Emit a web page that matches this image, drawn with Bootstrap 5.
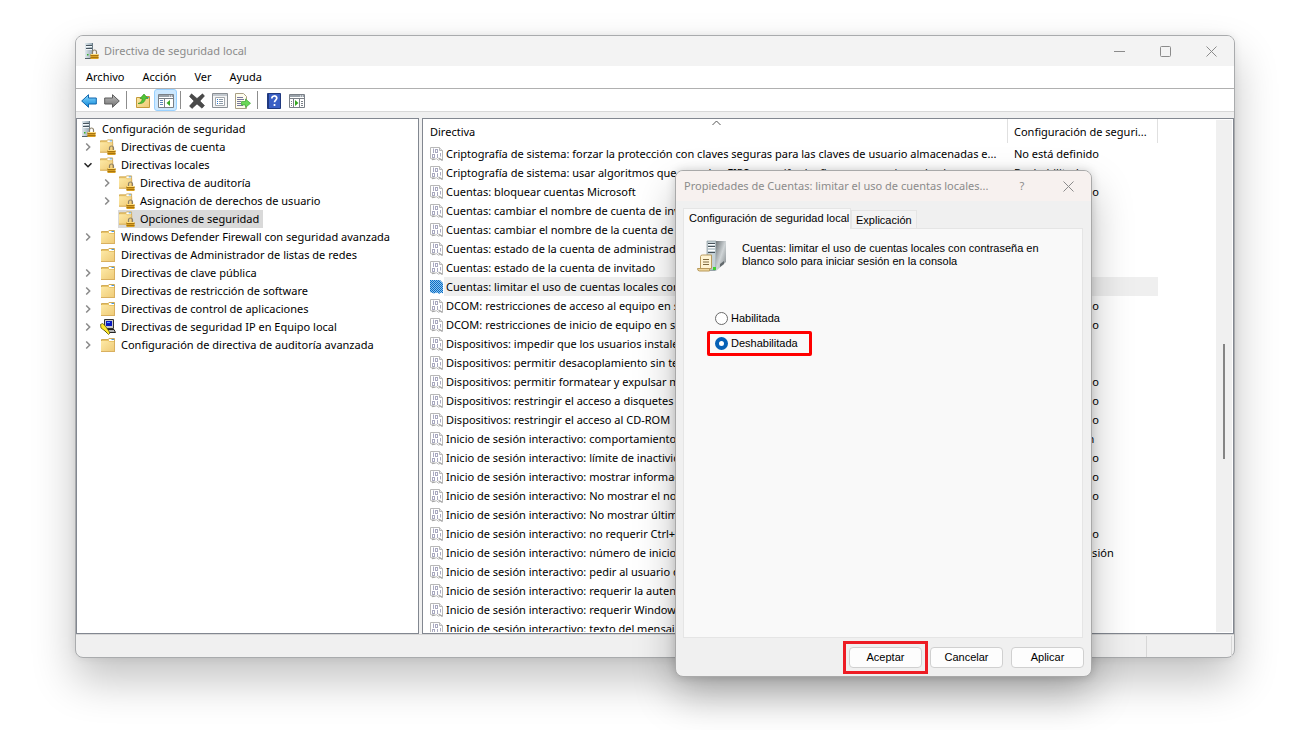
<!DOCTYPE html>
<html lang="es">
<head>
<meta charset="utf-8">
<meta name="viewport" content="width=device-width, initial-scale=1">
<title>Directiva de seguridad local</title>
<link href="https://cdn.jsdelivr.net/npm/bootstrap@5.3.0/dist/css/bootstrap.min.css" rel="stylesheet">
<style>
  body { font: 11px/18px "Noto Sans", "Open Sans", sans-serif; color: #000; background: #fff; }
  .desktop { padding: 35px 77px 72px 75px; }
  .win { min-height: 0; border: 1px solid #a9abad; border-radius: 8px; background: #f0f0f0; box-shadow: 0 22px 44px rgba(0,0,0,.24), 0 0 8px rgba(0,0,0,.08); }
  .caption { height: 30px; background: #f3f3f3; border-radius: 7px 7px 0 0; color: #8b8b8b; padding-left: 8px; }
  .caption button, .toolbtn, .twist { border: 0; background: none; padding: 0; color: inherit; display: flex; align-items: center; justify-content: center; }
  .caption button { width: 46px; height: 28px; }
  .menus { height: 23px; border-bottom: 1px solid #b0b0b0; padding-left: 10px; gap: 18px; }
  .menus a { color: #000; text-decoration: none; }
  .tools { height: 23px; border-bottom: 1px solid #d8d8d8; padding-left: 1px; }
  .toolbtn { width: 23px; height: 22px; border: 1px solid transparent; padding-top: 2px; }
  .toolbtn.on { background: #cce8ff; border-color: #99d1ff; border-radius: 3px; }
  .rule { width: 8px; height: 18px; border-left: 1px solid #8d8d8d; margin-left: 3px; margin-right: -3px; }
  .panes { gap: 3px; padding-top: 6px; min-height: 0; }
  .pane { background: #fff; border: 1px solid #828790; overflow: hidden; min-width: 0; }
  .tree-pane { flex: 0 0 343px; padding-top: 1px; }
  .tree-pane ul { list-style: none; margin: 0; padding: 0; }
  .tree-pane ul ul ul { padding-left: 19px; }
  .node { height: 18px; display: flex; align-items: center; padding-left: 3px; gap: 3px; }
  .twist { width: 16px; height: 18px; color: #8a8a8a; }
  .twist.open { color: #222; }
  .node a { display: flex; align-items: center; gap: 5px; padding: 0 4px 0 1px; color: #000; text-decoration: none; white-space: nowrap; }
  .node a.sel { background: #d9d9d9; }
  .list-view { margin-bottom: 1px; }
  .grid { table-layout: fixed; width: 100%; border-collapse: collapse; }
  .grid th { height: 25px; font-weight: 400; padding: 1px 0 0 7px; position: relative; white-space: nowrap; }
  .grid th.edge::after { content: ""; position: absolute; right: 0; top: 0; height: 24px; border-right: 1px solid #e0e0e0; }
  .grid td { padding: 0 0 0 7px; height: 19px; line-height: 19px; white-space: nowrap; overflow: hidden; }
  .grid th + th, .grid td + td { padding-left: 6px; }
  .grid td svg { width: 13px; height: 14px; vertical-align: -3px; margin-right: 3px; }
  .grid .hot td { background: #efefef; }
  .grid .hot td:first-child { background: linear-gradient(#efefef, #efefef) 21px 0 no-repeat; }
  .grid .hot td:last-child { background: none; }
  .caret { position: absolute; top: 1px; left: 50%; margin-left: -4px; }
  .track { flex: 0 0 16px; background: #f0f0f0; margin: 1px; padding: 224px 0 0 7px; }
  .thumb { width: 2px; height: 115px; background: #858585; }
  .status { height: 23px; border-top: 1px solid #d7d7d7; padding: 1px 2px 0 0; }
  .status div { border-right: 1px solid #d7d7d7; }
  .status .cell { width: 85px; }
  .dlg { position: absolute; left: 599px; top: 134px; width: 417px; border: 1px solid #a9a9a9; border-radius: 8px; background: #f0f0f0; font: 11px/13px "Liberation Sans", Arial, sans-serif; box-shadow: 0 20px 40px rgba(0,0,0,.26), 0 0 10px rgba(0,0,0,.16); }
  .dlg .caption { background: #f7f1ef; font: 11px/18px "Noto Sans", sans-serif; }
  .sheet { padding: 7px 8px 0 7px; }
  .tabs button { border: 1px solid #e5e5e5; border-bottom: 0; background: #f3f3f3; height: 18px; padding: 1px 4px 0; color: #000; }
  .tabs button.on { background: #f9f9f9; height: 21px; margin-bottom: -1px; padding: 0 5px 2px; width: 168px; text-align: left; white-space: nowrap; position: relative; z-index: 1; }
  .page { background: #f9f9f9; border: 1px solid #e5e5e5; height: 410px; padding: 11px 13px; }
  .summary { gap: 13px; margin-bottom: 34px; }
  .summary p { padding-top: 2px; white-space: nowrap; }
  .radios { padding-left: 10px; }
  .opt { height: 25px; width: 105px; padding-left: 5px; border: 3px solid transparent; display: flex; align-items: center; gap: 3px; }
  .opt.marked { border-color: #f00; border-radius: 2px; }
  .opt input { appearance: none; flex: none; width: 13px; height: 13px; margin: 0; border: 1px solid #6b6b6b; border-radius: 50%; background: #fff; }
  .opt input:checked { border: 4px solid #0560b6; }
  .acts { padding: 9px 7px 8px; gap: 8px; }
  .acts button { width: 73px; height: 21px; border: 1px solid #d0d0d0; border-radius: 4px; background: #fdfdfd; color: #000; padding: 0; }
  .acts .wrapmark { outline: 3px solid #ed1c24; outline-offset: 3px; display: flex; }
</style>
<script src="https://cdn.jsdelivr.net/npm/bootstrap@5.3.0/dist/js/bootstrap.bundle.min.js"></script>
</head>
<body class="overflow-hidden">
<svg width="0" height="0" class="position-absolute" aria-hidden="true">
  <defs>
    <linearGradient id="gFold" x1="0" y1="0" x2="1" y2="1"><stop offset="0" stop-color="#fde9a6"/><stop offset="1" stop-color="#eec974"/></linearGradient>
    <linearGradient id="gBlue" x1="0" y1="0" x2="0" y2="1"><stop offset="0" stop-color="#8fdcff"/><stop offset="1" stop-color="#0a85d8"/></linearGradient>
    <linearGradient id="gGray" x1="0" y1="0" x2="0" y2="1"><stop offset="0" stop-color="#bdbdbd"/><stop offset="1" stop-color="#707070"/></linearGradient>
    <linearGradient id="gTower" x1="0" y1="0" x2="1" y2="0"><stop offset="0" stop-color="#dfe8ed"/><stop offset="1" stop-color="#92a5b0"/></linearGradient>
    <linearGradient id="gSide" x1="0" y1="0" x2="1" y2="1"><stop offset="0" stop-color="#6f7679"/><stop offset=".5" stop-color="#cfd4d6"/><stop offset="1" stop-color="#7d8487"/></linearGradient>
    <pattern id="dots" width="2" height="2" patternUnits="userSpaceOnUse"><rect width="2" height="2" fill="#8cc3ee"/><path d="M0 0h1v1H0zM1 1h1v1H1z" fill="#0b6cc4"/></pattern>
    <symbol id="lock" viewBox="0 0 9 10"><path d="M2.500 5V3a2 2 0 0 1 4 0v2" fill="none" stroke="#8c8068" stroke-width="1.200"/><path d="M.5 5h8v5h-8z" fill="#d9a021"/><path d="M.5 6.500h8M.5 8.500h8" stroke="#a8740e"/><path d="M1 5.500h7" stroke="#ffdc7a"/></symbol>
    <symbol id="srvlock" viewBox="0 0 16 16"><path d="M1 0h8v15H1z" fill="url(#gTower)"/><path d="M2 2.500h6M2 5.500h6" stroke="#46545e"/><path d="M2 3.500h6M2 6.500h6" stroke="#f4f8fa"/><rect x="3" y="11" width="1.500" height="1.500" fill="#36b22c"/><path d="M1 15.500h8" stroke="#54626b"/><path d="M8.500 0v15" stroke="#6b7c87"/><use href="#lock" x="6" y="6" width="9" height="10"/></symbol>
    <symbol id="fold" viewBox="0 0 16 16"><path d="M1.500 14.500v-12H8l1-1h5.500v13z" fill="#e8c468" stroke="#d2ac58"/><path d="M9 2h5v2H9z" fill="#fff"/><path d="M11.500 2.500H14" stroke="#4a9be0"/><path d="M1 4h7.500l1 1H15v10H1z" fill="url(#gFold)"/><path d="M1 14.500h14M14.500 5v10" stroke="#d9b060"/></symbol>
    <symbol id="foldlock" viewBox="0 0 16 16"><use href="#fold" x="-1" y="-1" width="15" height="16"/><use href="#lock" x="7" y="6" width="9" height="10"/></symbol>
    <symbol id="ipsec" viewBox="0 0 16 16"><path d="M4.500.5h9v9h-9z" fill="#c9c9c9" stroke="#333"/><path d="M6 2h6v5H6z" fill="#0818c0"/><path d="M7 3.500h3" stroke="#58a8ff"/><path d="M4 10.500h10l1.500 3h-9z" fill="#b5b5b5" stroke="#222"/><path d="M.5 5.500l2-1 2 1.500 3 4 2.500 4-1.500 1.500-3.500-3.500L1 9z" fill="#ffe92b" stroke="#4b4300" stroke-width=".7"/></symbol>
    <symbol id="pol" viewBox="0 0 13 14"><path d="M.5.500h9l3 3v9.500l-2-.8-2 1-2-1.500-2.500.8-3.500-1z" fill="#fff" stroke="#b8b8b8"/><path d="M9.500.500v3h3" fill="#e6e6e6" stroke="#b8b8b8"/><path d="M2 12.500l2.500-.5M8.500 11l4 2.500" stroke="#a8a8a8" stroke-width="1.300"/><g fill="none" stroke="#a9a9c0"><path d="M3.500 1.500V6M7.500 7v4M10.500 6v3.500"/><rect x="5.500" y="2.500" width="2" height="3"/><rect x="2.500" y="7.500" width="2" height="3"/></g></symbol>
    <symbol id="polsel" viewBox="0 0 13 14"><path d="M0 0h10l3 3v10.500l-2-1-2 1.500-2-1.500-3 1-4-1.500z" fill="url(#dots)"/></symbol>
    <symbol id="cr" viewBox="0 0 8 8"><path d="M2.200.5L5.700 4 2.200 7.500" fill="none" stroke="currentColor" stroke-width="1.500"/></symbol>
    <symbol id="cd" viewBox="0 0 8 8"><path d="M.5 2.200L4 5.700 7.500 2.200" fill="none" stroke="currentColor" stroke-width="1.600"/></symbol>
    <symbol id="xx" viewBox="0 0 11 11"><path d="M.5.500l10 10M10.500.500l-10 10" stroke="currentColor" fill="none"/></symbol>
    <symbol id="arrow" viewBox="0 0 16 16"><path d="M.700 8L7.500 1.700V5h7.800v6H7.500v3.300z"/></symbol>
    <symbol id="panel" viewBox="0 0 16 14"><path d="M.5.500h15v13H.5z" fill="#fff" stroke="#7a8087"/><path d="M1 2h14" stroke="#9aa2aa" stroke-width="2"/><path d="M11 2h1M13 2h1" stroke="#fff"/><path d="M1 4.500h14" stroke="#7a8087"/></symbol>
  </defs>
</svg>

<main class="desktop vh-100 d-flex flex-column">
  <section class="win position-relative flex-grow-1 d-flex flex-column">
    <header class="caption d-flex align-items-center flex-shrink-0">
      <svg class="me-1" width="16" height="16"><use href="#srvlock"/></svg>
      <span class="me-auto">Directiva de seguridad local</span>
      <button aria-label="Minimizar"><svg width="11" height="11"><path d="M0 5.500h11" stroke="currentColor"/></svg></button>
      <button aria-label="Maximizar"><svg width="11" height="11"><rect x=".5" y=".5" width="10" height="10" rx="1" fill="none" stroke="currentColor"/></svg></button>
      <button aria-label="Cerrar"><svg width="11" height="11"><use href="#xx"/></svg></button>
    </header>
    <nav class="menus bg-white d-flex align-items-center flex-shrink-0">
      <a href="#">Archivo</a><a href="#">Acción</a><a href="#">Ver</a><a href="#">Ayuda</a>
    </nav>
    <div class="tools bg-white d-flex align-items-center flex-shrink-0">
      <button class="toolbtn" aria-label="Atrás"><svg width="16" height="16" fill="url(#gBlue)" stroke="#1267ad"><use href="#arrow"/></svg></button>
      <button class="toolbtn" aria-label="Adelante"><svg width="16" height="16" fill="url(#gGray)" stroke="#5c5c5c"><g transform="matrix(-1 0 0 1 16 0)"><use href="#arrow"/></g></svg></button>
      <span class="rule"></span>
      <button class="toolbtn" aria-label="Subir un nivel"><svg width="16" height="16"><path d="M1.500 14.500v-10h5l1-1h7v11z" fill="url(#gFold)" stroke="#c49a3c"/><path d="M11 4.500h3" stroke="#4a9be0"/><path d="M3 10.500c3-.5 4-2.500 4.200-5H5L9 1l4 4.500h-2.500c-.5 3.500-3 5.500-7.500 5z" fill="#4fc436" stroke="#2a8f1c" stroke-width=".6"/></svg></button>
      <button class="toolbtn on" aria-label="Mostrar árbol"><svg width="16" height="14"><use href="#panel"/><path d="M6.500 5v8.500" stroke="#7a8087"/><path d="M2 6.500h3M2 8.500h3M2 10.500h3" stroke="#5a86b8"/><path d="M12 6v6L8.500 9z" fill="#35a822"/></svg></button>
      <span class="rule"></span>
      <button class="toolbtn" aria-label="Eliminar"><svg width="16" height="16"><path d="M2.500.8L8 5.500l5.500-4.700 2 2.200L11 8l4.500 4.500-2.500 2.700L8 11l-5 4.500L.5 13 5 8 .5 3.500z" fill="#4a4a4a" stroke="#333" stroke-width=".5"/></svg></button>
      <button class="toolbtn" aria-label="Propiedades"><svg width="16" height="16"><path d="M.5.500h15v14H.5z" fill="#f4f4f4" stroke="#8a8f94"/><path d="M1 2h14" stroke="#c2c8ce" stroke-width="2"/><path d="M3.500 4.500h9v8h-9z" fill="#fff" stroke="#a4a9ae"/><path d="M5 6.500h1M5 8.500h1M5 10.500h1" stroke="#2a7ad0"/><path d="M7 6.500h4M7 8.500h4M7 10.500h4" stroke="#8b98a5"/></svg></button>
      <button class="toolbtn" aria-label="Exportar lista"><svg width="16" height="16"><path d="M.5.500h8l3 3v12H.5z" fill="#fffdee" stroke="#a89f84"/><path d="M2 4.500h6M2 6.500h7M2 8.500h4M2 10.500h4M2 12.500h6" stroke="#77779c"/><path d="M6.500 8.500h4V6l5 4.300-5 4.200V12h-4z" fill="#6ad857" stroke="#3da431" stroke-width=".7"/></svg></button>
      <span class="rule"></span>
      <button class="toolbtn" aria-label="Ayuda"><svg width="16" height="16"><path d="M1.500.500h13v15h-13z" fill="#3a5fc4" stroke="#20397f"/><path d="M2.500 1v14" stroke="#20397f"/><path d="M5.800 5.500c0-3.300 5-3.300 5-.4 0 2-2.300 2-2.300 4.200M8.500 11v2" fill="none" stroke="#fff" stroke-width="1.700"/></svg></button>
      <button class="toolbtn" aria-label="Panel de acciones"><svg width="16" height="14"><use href="#panel"/><path d="M4.500 5v8.500M10.500 5v8.500" stroke="#7a8087"/><path d="M6 6v6l3.500-3z" fill="#35a822"/><path d="M12 7.500h2M12 9.500h2M12 11.500h2M2 7.500h1M2 9.500h1M2 11.500h1" stroke="#7a8087"/></svg></button>
    </div>

    <div class="panes d-flex flex-grow-1">
      <div class="pane tree-pane">
        <ul>
          <li><div class="node"><a href="#"><svg width="16" height="16"><use href="#srvlock"/></svg>Configuración de seguridad</a></div>
            <ul>
              <li><div class="node"><button class="twist" aria-label="Expandir"><svg width="8" height="8"><use href="#cr"/></svg></button><a href="#"><svg width="16" height="16"><use href="#foldlock"/></svg>Directivas de cuenta</a></div></li>
              <li><div class="node"><button class="twist open" aria-label="Contraer"><svg width="8" height="8"><use href="#cd"/></svg></button><a href="#"><svg width="16" height="16"><use href="#foldlock"/></svg>Directivas locales</a></div>
                <ul>
                  <li><div class="node"><button class="twist" aria-label="Expandir"><svg width="8" height="8"><use href="#cr"/></svg></button><a href="#"><svg width="16" height="16"><use href="#foldlock"/></svg>Directiva de auditoría</a></div></li>
                  <li><div class="node"><button class="twist" aria-label="Expandir"><svg width="8" height="8"><use href="#cr"/></svg></button><a href="#"><svg width="16" height="16"><use href="#foldlock"/></svg>Asignación de derechos de usuario</a></div></li>
                  <li><div class="node"><span class="twist"></span><a href="#" class="sel"><svg width="16" height="16"><use href="#foldlock"/></svg>Opciones de seguridad</a></div></li>
                </ul></li>
              <li><div class="node"><button class="twist" aria-label="Expandir"><svg width="8" height="8"><use href="#cr"/></svg></button><a href="#"><svg width="16" height="16"><use href="#fold"/></svg>Windows Defender Firewall con seguridad avanzada</a></div></li>
              <li><div class="node"><span class="twist"></span><a href="#"><svg width="16" height="16"><use href="#fold"/></svg>Directivas de Administrador de listas de redes</a></div></li>
              <li><div class="node"><button class="twist" aria-label="Expandir"><svg width="8" height="8"><use href="#cr"/></svg></button><a href="#"><svg width="16" height="16"><use href="#fold"/></svg>Directivas de clave pública</a></div></li>
              <li><div class="node"><button class="twist" aria-label="Expandir"><svg width="8" height="8"><use href="#cr"/></svg></button><a href="#"><svg width="16" height="16"><use href="#fold"/></svg>Directivas de restricción de software</a></div></li>
              <li><div class="node"><button class="twist" aria-label="Expandir"><svg width="8" height="8"><use href="#cr"/></svg></button><a href="#"><svg width="16" height="16"><use href="#fold"/></svg>Directivas de control de aplicaciones</a></div></li>
              <li><div class="node"><button class="twist" aria-label="Expandir"><svg width="8" height="8"><use href="#cr"/></svg></button><a href="#"><svg width="16" height="16"><use href="#ipsec"/></svg>Directivas de seguridad IP en Equipo local</a></div></li>
              <li><div class="node"><button class="twist" aria-label="Expandir"><svg width="8" height="8"><use href="#cr"/></svg></button><a href="#"><svg width="16" height="16"><use href="#fold"/></svg>Configuración de directiva de auditoría avanzada</a></div></li>
            </ul></li>
        </ul>
      </div>

      <div class="pane d-flex flex-grow-1">
        <div class="list-view flex-grow-1 overflow-hidden">
          <table class="grid">
            <colgroup><col style="width:585px"><col style="width:150px"><col></colgroup>
            <thead><tr><th class="edge">Directiva<svg class="caret" width="9" height="6"><path d="M.5 5L4.500 1l4 4" fill="none" stroke="#555"/></svg></th><th class="edge">Configuración de seguri...</th><th></th></tr></thead>
            <tbody>
              <tr><td><svg><use href="#pol"/></svg>Criptografía de sistema: forzar la protección con claves seguras para las claves de usuario almacenadas e...</td><td>No está definido</td><td></td></tr>
              <tr><td><svg><use href="#pol"/></svg>Criptografía de sistema: usar algoritmos que cumplan FIPS para cifrado, firma y operaciones hash</td><td>Deshabilitado</td><td></td></tr>
              <tr><td><svg><use href="#pol"/></svg>Cuentas: bloquear cuentas Microsoft</td><td>No está definido</td><td></td></tr>
              <tr><td><svg><use href="#pol"/></svg>Cuentas: cambiar el nombre de cuenta de invitado</td><td>Invitado</td><td></td></tr>
              <tr><td><svg><use href="#pol"/></svg>Cuentas: cambiar el nombre de la cuenta de administrador</td><td>Administrador</td><td></td></tr>
              <tr><td><svg><use href="#pol"/></svg>Cuentas: estado de la cuenta de administrador</td><td>Deshabilitado</td><td></td></tr>
              <tr><td><svg><use href="#pol"/></svg>Cuentas: estado de la cuenta de invitado</td><td>Deshabilitado</td><td></td></tr>
              <tr class="hot"><td><svg><use href="#polsel"/></svg>Cuentas: limitar el uso de cuentas locales con contraseña en blanco</td><td>Habilitada</td><td></td></tr>
              <tr><td><svg><use href="#pol"/></svg>DCOM: restricciones de acceso al equipo en sintaxis SDDL</td><td>No está definido</td><td></td></tr>
              <tr><td><svg><use href="#pol"/></svg>DCOM: restricciones de inicio de equipo en sintaxis SDDL</td><td>No está definido</td><td></td></tr>
              <tr><td><svg><use href="#pol"/></svg>Dispositivos: impedir que los usuarios instalen controladores de impresora</td><td>Deshabilitado</td><td></td></tr>
              <tr><td><svg><use href="#pol"/></svg>Dispositivos: permitir desacoplamiento sin tener que iniciar sesión</td><td>Habilitada</td><td></td></tr>
              <tr><td><svg><use href="#pol"/></svg>Dispositivos: permitir formatear y expulsar medios extraíbles</td><td>No está definido</td><td></td></tr>
              <tr><td><svg><use href="#pol"/></svg>Dispositivos: restringir el acceso a disquetes</td><td>No está definido</td><td></td></tr>
              <tr><td><svg><use href="#pol"/></svg>Dispositivos: restringir el acceso al CD-ROM</td><td>No está definido</td><td></td></tr>
              <tr><td><svg><use href="#pol"/></svg>Inicio de sesión interactivo: comportamiento de extracción de tarjeta</td><td>Ninguna acción</td><td></td></tr>
              <tr><td><svg><use href="#pol"/></svg>Inicio de sesión interactivo: límite de inactividad del equipo</td><td>No está definido</td><td></td></tr>
              <tr><td><svg><use href="#pol"/></svg>Inicio de sesión interactivo: mostrar información de usuario</td><td>No está definido</td><td></td></tr>
              <tr><td><svg><use href="#pol"/></svg>Inicio de sesión interactivo: No mostrar el nombre de usuario</td><td>No está definido</td><td></td></tr>
              <tr><td><svg><use href="#pol"/></svg>Inicio de sesión interactivo: No mostrar último inicio de sesión</td><td>Deshabilitado</td><td></td></tr>
              <tr><td><svg><use href="#pol"/></svg>Inicio de sesión interactivo: no requerir Ctrl+Alt+Supr</td><td>No está definido</td><td></td></tr>
              <tr><td><svg><use href="#pol"/></svg>Inicio de sesión interactivo: número de inicios de sesión anteriores</td><td>10 inicios de sesión</td><td></td></tr>
              <tr><td><svg><use href="#pol"/></svg>Inicio de sesión interactivo: pedir al usuario que cambie la contraseña</td><td>5 días</td><td></td></tr>
              <tr><td><svg><use href="#pol"/></svg>Inicio de sesión interactivo: requerir la autenticación</td><td>Deshabilitado</td><td></td></tr>
              <tr><td><svg><use href="#pol"/></svg>Inicio de sesión interactivo: requerir Windows Hello</td><td>Deshabilitado</td><td></td></tr>
              <tr><td><svg><use href="#pol"/></svg>Inicio de sesión interactivo: texto del mensaje</td><td></td><td></td></tr>
            </tbody>
          </table>
        </div>
        <div class="track"><div class="thumb"></div></div>
      </div>
    </div>

    <footer class="status d-flex flex-shrink-0"><div class="flex-grow-1"></div><div class="cell"></div></footer>

    <section class="dlg" role="dialog" aria-labelledby="dlgTitle">
      <header class="caption d-flex align-items-center">
        <span id="dlgTitle" class="me-auto">Propiedades de Cuentas: limitar el uso de cuentas locales...</span>
        <button aria-label="Ayuda">?</button>
        <button aria-label="Cerrar"><svg width="11" height="11"><use href="#xx"/></svg></button>
      </header>
      <div class="sheet">
        <div class="tabs d-flex align-items-end"><button class="on">Configuración de seguridad local</button><button>Explicación</button></div>
        <div class="page">
          <div class="summary d-flex">
            <svg width="32" height="32" class="flex-shrink-0"><path d="M10 1h11v27l-3 3h-8z" fill="#9fadb3"/><path d="M10 1h9v29h-9z" fill="#c5d1d6" stroke="#7b898f" stroke-width=".6"/><path d="M11 3.500h7M11 6.500h7M11 12.500h7" stroke="#47535a"/><path d="M11 4.500h7M11 7.500h7M11 10.500h7" stroke="#fff"/><path d="M19 1h10v21l-10 9z" fill="url(#gSide)"/><path d="M23 24l4-3v3l-4 3z" fill="#62696c"/><rect x="16" y="27" width="3" height="3" fill="#3fd02f"/><path d="M3.500 16.500q0-1.500 2-1.500h9v13.500h-11z" fill="#fff4d2" stroke="#b99a5c"/><path d="M6 19.500h6M6 22h6M6 24.500h6" stroke="#806b3f"/><path d="M.5 28.500h12v2.500h-10q-2 0-2-2.500z" fill="#f0d79b" stroke="#b99a5c"/></svg>
            <p class="mb-0">Cuentas: limitar el uso de cuentas locales con contraseña en<br>blanco solo para iniciar sesión en la consola</p>
          </div>
          <div class="radios">
            <label class="opt"><input type="radio" name="estado">Habilitada</label>
            <label class="opt marked"><input type="radio" name="estado" checked>Deshabilitada</label>
          </div>
        </div>
      </div>
      <footer class="acts d-flex justify-content-end">
        <span class="wrapmark"><button>Aceptar</button></span><button>Cancelar</button><button>Aplicar</button>
      </footer>
    </section>
  </section>
</main>
</body>
</html>
